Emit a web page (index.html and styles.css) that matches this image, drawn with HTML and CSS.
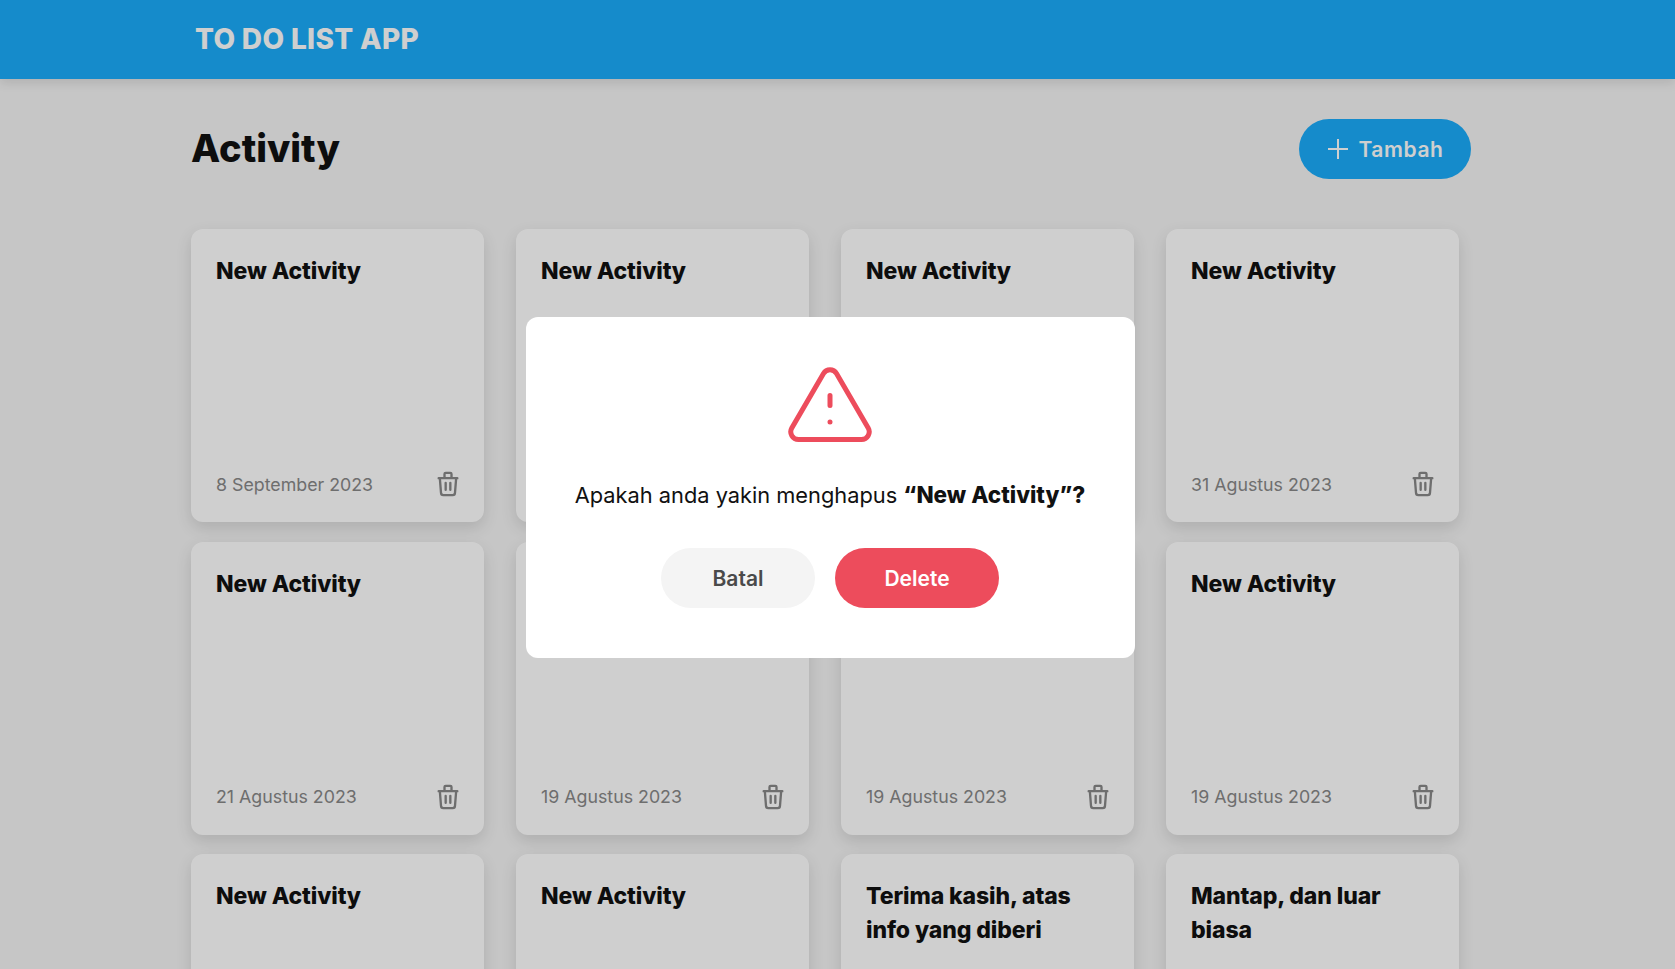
FILE: index.html
```html
<!DOCTYPE html>
<html>
<head>
  <title>To Do List App</title>
  <link rel="stylesheet" href="styles.css">
</head>
<body>
  <header class="app-header">
    <div class="container">
      <h1 class="logo">TO DO LIST APP</h1>
    </div>
  </header>

  <main class="container">
    <div class="page-head">
      <h2 class="page-title">Activity</h2>
      <button class="add-btn">
        <svg class="add-icon" viewBox="0 0 24 24"><path d="M12 2v20M2 12h20"/></svg>
        Tambah
      </button>
    </div>

    <div class="card-grid">
      <div class="card">
        <h3 class="card-title">New Activity</h3>
        <div class="card-foot">
          <span class="card-date">8 September 2023</span>
          <svg class="trash" viewBox="0 0 24 24"><path d="M4 7h16M10 11v6M14 11v6M5 7l1 12.5a2 2 0 0 0 2 2h8a2 2 0 0 0 2-2l1-12.5M9 7V3.500a1 1 0 0 1 1-1h4a1 1 0 0 1 1 1V7"/></svg>
        </div>
      </div>
      <div class="card">
        <h3 class="card-title">New Activity</h3>
      </div>
      <div class="card">
        <h3 class="card-title">New Activity</h3>
      </div>
      <div class="card">
        <h3 class="card-title">New Activity</h3>
        <div class="card-foot">
          <span class="card-date">31 Agustus 2023</span>
          <svg class="trash" viewBox="0 0 24 24"><path d="M4 7h16M10 11v6M14 11v6M5 7l1 12.5a2 2 0 0 0 2 2h8a2 2 0 0 0 2-2l1-12.5M9 7V3.500a1 1 0 0 1 1-1h4a1 1 0 0 1 1 1V7"/></svg>
        </div>
      </div>

      <div class="card">
        <h3 class="card-title">New Activity</h3>
        <div class="card-foot">
          <span class="card-date">21 Agustus 2023</span>
          <svg class="trash" viewBox="0 0 24 24"><path d="M4 7h16M10 11v6M14 11v6M5 7l1 12.5a2 2 0 0 0 2 2h8a2 2 0 0 0 2-2l1-12.5M9 7V3.500a1 1 0 0 1 1-1h4a1 1 0 0 1 1 1V7"/></svg>
        </div>
      </div>
      <div class="card">
        <div class="card-foot">
          <span class="card-date">19 Agustus 2023</span>
          <svg class="trash" viewBox="0 0 24 24"><path d="M4 7h16M10 11v6M14 11v6M5 7l1 12.5a2 2 0 0 0 2 2h8a2 2 0 0 0 2-2l1-12.5M9 7V3.500a1 1 0 0 1 1-1h4a1 1 0 0 1 1 1V7"/></svg>
        </div>
      </div>
      <div class="card">
        <div class="card-foot">
          <span class="card-date">19 Agustus 2023</span>
          <svg class="trash" viewBox="0 0 24 24"><path d="M4 7h16M10 11v6M14 11v6M5 7l1 12.5a2 2 0 0 0 2 2h8a2 2 0 0 0 2-2l1-12.5M9 7V3.500a1 1 0 0 1 1-1h4a1 1 0 0 1 1 1V7"/></svg>
        </div>
      </div>
      <div class="card">
        <h3 class="card-title">New Activity</h3>
        <div class="card-foot">
          <span class="card-date">19 Agustus 2023</span>
          <svg class="trash" viewBox="0 0 24 24"><path d="M4 7h16M10 11v6M14 11v6M5 7l1 12.5a2 2 0 0 0 2 2h8a2 2 0 0 0 2-2l1-12.5M9 7V3.500a1 1 0 0 1 1-1h4a1 1 0 0 1 1 1V7"/></svg>
        </div>
      </div>

      <div class="card">
        <h3 class="card-title">New Activity</h3>
      </div>
      <div class="card">
        <h3 class="card-title">New Activity</h3>
      </div>
      <div class="card">
        <h3 class="card-title">Terima kasih, atas info yang diberi</h3>
      </div>
      <div class="card">
        <h3 class="card-title">Mantap, dan luar biasa</h3>
      </div>
    </div>
  </main>

  <!-- Delete confirmation -->
  <div class="overlay">
    <div class="modal">
      <svg class="warn-icon" viewBox="0 0 84 75">
        <path d="M35.5 6.500a7.500 7.500 0 0 1 13 0L80.200 61a7.700 7.700 0 0 1-6.700 11.500h-63A7.700 7.700 0 0 1 3.800 61z"/>
        <path d="M42 28.500v10M42 55h.01"/>
      </svg>
      <p class="modal-text">Apakah anda yakin menghapus <strong>“New Activity”?</strong></p>
      <div class="modal-actions">
        <button class="btn btn-cancel">Batal</button>
        <button class="btn btn-delete">Delete</button>
      </div>
    </div>
  </div>
</body>
</html>
```

FILE: styles.css
```css
/* Page */
html, body {
  height: 100%;
  overflow: hidden;
}

body {
  margin: 0;
  background-color: #f4f4f4;
  color: #111;
  font-family: Inter, "Noto Sans", sans-serif;
}

.container {
  width: 1280px;
  margin-left: 191px;
}

/* Header */
.app-header {
  height: 79px;
  display: flex;
  align-items: center;
  background-color: #1bacfa;
  color: #fff;
  box-shadow: 0 4px 10px rgba(0, 0, 0, 0.1);
}

.logo {
  margin: -2px 0 0 4px;
  font-size: 28px;
  font-weight: 800;
  letter-spacing: 0.35px;
}

/* Title row */
.page-head {
  display: flex;
  justify-content: space-between;
  align-items: center;
  padding-top: 40px;
  margin-bottom: 50px;
}

.page-title {
  margin: -2px 0 0;
  font-size: 38px;
  font-weight: 800;
}

.add-btn {
  display: flex;
  align-items: center;
  justify-content: center;
  gap: 8px;
  width: 172px;
  height: 60px;
  border: none;
  border-radius: 30px;
  background-color: #1bacfa;
  color: #fff;
  font-family: inherit;
  font-size: 21px;
  font-weight: 600;
  letter-spacing: 0.6px;
}

.add-icon {
  width: 24px;
  height: 24px;
  fill: none;
  stroke: #fff;
  stroke-width: 2;
}

/* Activity cards */
.card-grid {
  display: grid;
  grid-template-columns: repeat(4, 293px);
  column-gap: 32px;
  row-gap: 19.5px;
}

.card {
  height: 293px;
  box-sizing: border-box;
  padding: 25px 25px 24px;
  display: flex;
  flex-direction: column;
  background-color: #fff;
  border-radius: 12px;
  box-shadow: 0 6px 16px rgba(0, 0, 0, 0.12);
}

.card-title {
  margin: 0;
  font-size: 23px;
  line-height: 34px;
  font-weight: 800;
  letter-spacing: -0.1px;
}

.card-foot {
  margin-top: auto;
  display: flex;
  justify-content: space-between;
  align-items: center;
}

.card-date {
  font-size: 17.8px;
  color: #888;
}

.trash {
  width: 28px;
  height: 28px;
  margin-right: -3px;
  fill: none;
  stroke: #888;
  stroke-width: 2;
  stroke-linecap: round;
  stroke-linejoin: round;
}

/* Modal */
.overlay {
  position: fixed;
  top: 0;
  left: 0;
  right: 0;
  bottom: 0;
  padding-right: 15px;
  display: flex;
  justify-content: center;
  align-items: flex-start;
  background-color: rgba(0, 0, 0, 0.19);
}

.modal {
  width: 609px;
  height: 341px;
  box-sizing: border-box;
  margin-top: 317px;
  padding-top: 50px;
  display: flex;
  flex-direction: column;
  align-items: center;
  background-color: #fff;
  border-radius: 12px;
}

.warn-icon {
  width: 84px;
  height: 75px;
  fill: none;
  stroke: #ed4c5c;
  stroke-width: 5;
  stroke-linecap: round;
  stroke-linejoin: round;
}

.modal-text {
  margin: 38px 0 0;
  font-size: 21.8px;
  line-height: 30px;
}

.modal-text strong {
  font-size: 22.5px;
  font-weight: 800;
}

.modal-actions {
  display: flex;
  gap: 20px;
  margin-top: 38px;
}

.btn {
  height: 60px;
  border: none;
  border-radius: 30px;
  font-family: inherit;
  font-size: 21px;
  font-weight: 600;
}

.btn-cancel {
  width: 154px;
  background-color: #f4f4f4;
  color: #4a4a4a;
}

.btn-delete {
  width: 164px;
  background-color: #ed4c5c;
  color: #fff;
}
```
